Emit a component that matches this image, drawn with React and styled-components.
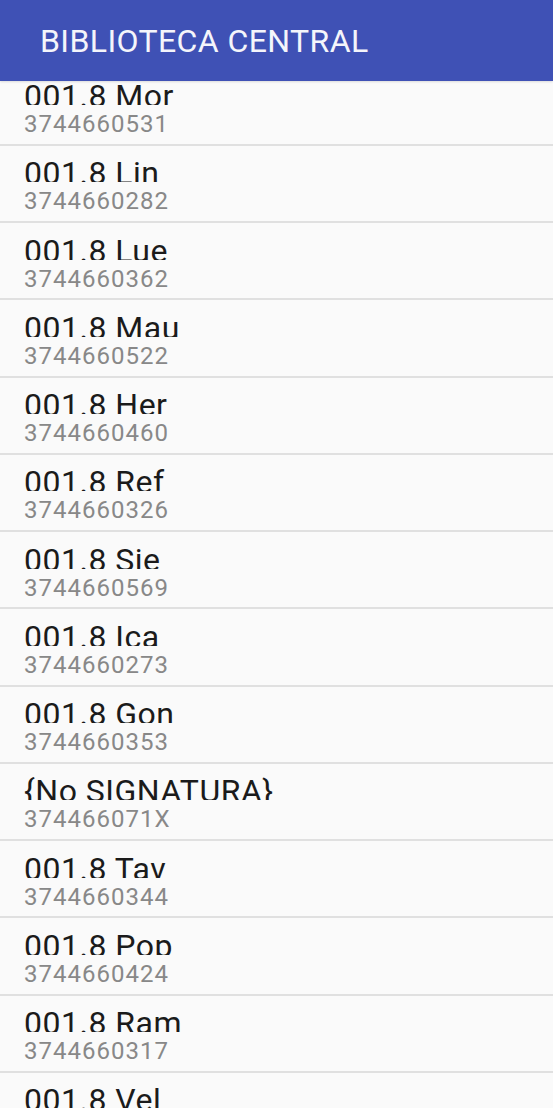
import React from 'react'
import styled, { createGlobalStyle } from 'styled-components'

const libros = [
  { signatura: '001.8 Mor', codigo: '3744660531' },
  { signatura: '001.8 Lin', codigo: '3744660282' },
  { signatura: '001.8 Lue', codigo: '3744660362' },
  { signatura: '001.8 Mau', codigo: '3744660522' },
  { signatura: '001.8 Her', codigo: '3744660460' },
  { signatura: '001.8 Ref', codigo: '3744660326' },
  { signatura: '001.8 Sie', codigo: '3744660569' },
  { signatura: '001.8 Ica', codigo: '3744660273' },
  { signatura: '001.8 Gon', codigo: '3744660353' },
  { signatura: '{No SIGNATURA}', codigo: '374466071X' },
  { signatura: '001.8 Tav', codigo: '3744660344' },
  { signatura: '001.8 Pop', codigo: '3744660424' },
  { signatura: '001.8 Ram', codigo: '3744660317' },
  { signatura: '001.8 Vel', codigo: '3744660308' },
]

const App = () => {
  return (
    <>
      <Global />
      <Pantalla>
        <Barra>
          <Titulo>BIBLIOTECA CENTRAL</Titulo>
        </Barra>
        <Lista>
          {/* la lista esta desplazada un poco hacia arriba */}
          <Contenido>
            {libros.map((libro) => (
              <Fila key={libro.codigo}>
                <Signatura>{libro.signatura}</Signatura>
                <Codigo>{libro.codigo}</Codigo>
              </Fila>
            ))}
          </Contenido>
        </Lista>
      </Pantalla>
    </>
  )
}

export default App

/* ESTILOS */

const Global = createGlobalStyle`
  html, body {
    margin: 0;
    padding: 0;
    background: #fafafa;
  }
  body {
    font-family: Roboto, "Noto Sans", "Liberation Sans", sans-serif;
  }
`

const Pantalla = styled.div`
  display: flex;
  flex-direction: column;
  height: 100vh;
  overflow: hidden;
  background: #fafafa;
`

const Barra = styled.header`
  position: relative;
  z-index: 1;
  flex: 0 0 81px;
  display: flex;
  align-items: center;
  padding-left: 40px;
  background-color: #3f51b5;
  box-shadow: 0 1px 2px rgba(0, 0, 0, 0.12);
`

const Titulo = styled.h1`
  margin: 0;
  font-size: 32px;
  line-height: 32px;
  font-weight: 400;
  letter-spacing: 0.4px;
  color: #f4f5fb;
`

const Lista = styled.div`
  flex: 1;
  overflow: hidden;
`

const Contenido = styled.div`
  display: flex;
  flex-direction: column;
  margin-top: -12.5px;
`

const Fila = styled.div`
  box-sizing: border-box;
  flex: 0 0 77.25px;
  display: flex;
  flex-direction: column;
  padding: 11.6px 24px 0;
  border-bottom: 2px solid #e0e0e0;
`

const Signatura = styled.div`
  height: 25px;
  overflow: hidden;
  font-size: 32px;
  line-height: 32px;
  letter-spacing: 0.5px;
  color: #1b1b1b;
  white-space: nowrap;
`

const Codigo = styled.div`
  margin-top: 7px;
  font-size: 24px;
  line-height: 24px;
  letter-spacing: 1px;
  color: #888888;
`
